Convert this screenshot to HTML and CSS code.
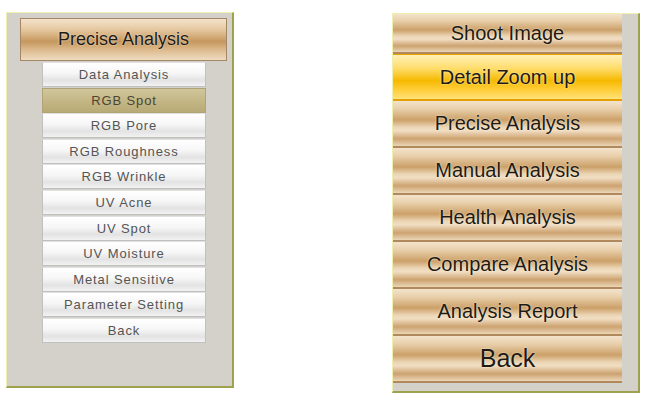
FILE: index.html
```html
<!DOCTYPE html>
<html lang="en">
<head>
    <meta charset="UTF-8">
    <title>Analysis Menu</title>
    <link rel="stylesheet" href="styles.css">
</head>
<body>
    <div class="screen">
        <div class="panel sub-panel">
            <div class="wood-btn header-btn">Precise Analysis</div>
            <ul class="sub-menu">
                <li>Data Analysis</li>
                <li class="active">RGB Spot</li>
                <li>RGB Pore</li>
                <li>RGB Roughness</li>
                <li>RGB Wrinkle</li>
                <li>UV Acne</li>
                <li>UV Spot</li>
                <li>UV Moisture</li>
                <li>Metal Sensitive</li>
                <li>Parameter Setting</li>
                <li>Back</li>
            </ul>
        </div>

        <div class="panel main-panel">
            <div class="main-menu">
                <div class="wood-btn first">Shoot Image</div>
                <div class="wood-btn selected">Detail Zoom up</div>
                <div class="wood-btn">Precise Analysis</div>
                <div class="wood-btn">Manual Analysis</div>
                <div class="wood-btn">Health Analysis</div>
                <div class="wood-btn">Compare Analysis</div>
                <div class="wood-btn">Analysis Report</div>
                <div class="wood-btn back">Back</div>
            </div>
        </div>
    </div>
</body>
</html>
```

FILE: styles.css
```css
body {
    margin: 0;
    background: #fff;
    font-family: "Liberation Sans", Arial, sans-serif;
}
.screen {
    display: flex;
    align-items: flex-start;
    gap: 158px;
    padding: 12px 0 0 6px;
}
.panel {
    background: #d4d1cb;
    border-top: 1px solid #eef0b0;
    border-left: 1px solid #eef0b0;
    border-right: 2px solid #9ea24e;
    border-bottom: 2px solid #9ea24e;
    box-sizing: border-box;
}
.sub-panel {
    width: 228px;
    height: 376px;
    padding: 5px 0 0 13px;
}
.main-panel {
    width: 248px;
    height: 380px;
    margin-top: 1px;
    padding-right: 16px;
}

/* wooden buttons */
.wood-btn {
    display: flex;
    align-items: center;
    justify-content: center;
    color: #1e1a14;
    font-size: 20px;
    text-shadow: 0 0 2px rgba(255, 248, 230, 0.9);
    background: linear-gradient(#f3e3cc 0%, #e8cfaa 18%, #cca068 42%, #ebd5b5 58%, #f1dec3 66%, #cda270 84%, #ebd6b7 100%);
    border-bottom: 2px solid #b08a5c;
    height: 45px;
}
.header-btn {
    width: 207px;
    height: 43px;
    box-sizing: border-box;
    border: 1px solid #a48866;
    font-size: 18px;
    background: linear-gradient(#f3e2ca 0%, #e6c9a1 25%, #c6975e 55%, #dcb98c 75%, #efdcc2 100%);
}
.main-menu {
    display: flex;
    flex-direction: column;
}
.main-menu .first {
    height: 38px;
}
.main-menu .selected {
    background: linear-gradient(#fff0b8 0%, #ffdd6c 30%, #f6b900 58%, #ffcf3c 80%, #ffe27a 100%);
    border-top: 1px solid #e9a400;
    border-bottom: 2px solid #e3a000;
    height: 44px;
}
.main-menu .back {
    font-size: 25px;
}

/* sub menu */
.sub-menu {
    list-style: none;
    margin: 1px 0 0 22px;
    padding: 0;
    width: 164px;
}
.sub-menu li {
    height: 23px;
    line-height: 23px;
    margin-bottom: 0.6px;
    text-align: center;
    font-size: 13px;
    letter-spacing: 0.9px;
    color: #555;
    background: linear-gradient(#ffffff 0%, #f6f6f6 45%, #e3e3e3 75%, #f2f2f2 100%);
    border: 1px solid #c0c0c0;
    border-top-color: #e0e0e0;
}
.sub-menu li.active {
    background: linear-gradient(#d0c69c 0%, #c3b684 55%, #b9ab78 100%);
    color: #4a4534;
    border-color: #b0a476;
}
```
